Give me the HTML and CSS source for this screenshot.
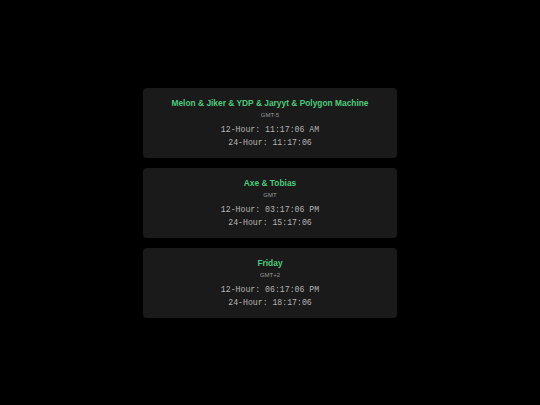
FILE: index.html
```html
<!DOCTYPE html>
<html>
<head>
<meta charset="utf-8">
<link rel="stylesheet" href="styles.css">
</head>
<body>
<div class="list">
  <div class="card">
    <div class="name">Melon &amp; Jiker &amp; YDP &amp; Jaryyt &amp; Polygon Machine</div>
    <div class="zone">GMT-5</div>
    <div class="time">12-Hour: 11:17:06 AM</div>
    <div class="time">24-Hour: 11:17:06</div>
  </div>
  <div class="card">
    <div class="name">Axe &amp; Tobias</div>
    <div class="zone">GMT</div>
    <div class="time">12-Hour: 03:17:06 PM</div>
    <div class="time">24-Hour: 15:17:06</div>
  </div>
  <div class="card">
    <div class="name">Friday</div>
    <div class="zone">GMT+2</div>
    <div class="time">12-Hour: 06:17:06 PM</div>
    <div class="time">24-Hour: 18:17:06</div>
  </div>
</div>
</body>
</html>
```
FILE: styles.css
```css
html, body {
  margin: 0;
  padding: 0;
  background: #000;
  height: 100%;
}
body {
  display: flex;
  align-items: center;
  justify-content: center;
  font-family: "Liberation Sans", Arial, sans-serif;
}
.list {
  display: flex;
  flex-direction: column;
  gap: 10px;
  width: 254px;
}
.card {
  background: #1a1a1a;
  border-radius: 4px;
  height: 70px;
  box-sizing: border-box;
  padding-top: 10px;
  text-align: center;
}
.name {
  color: #4ccb7c;
  font-weight: bold;
  font-size: 8.4px;
  line-height: 11px;
}
.zone {
  color: #9a9a9a;
  font-size: 6px;
  line-height: 12px;
  margin-bottom: 2.5px;
}
.time {
  font-family: "Liberation Mono", "Courier New", monospace;
  color: #b4b4b4;
  font-size: 8.2px;
  line-height: 13px;
}
```
